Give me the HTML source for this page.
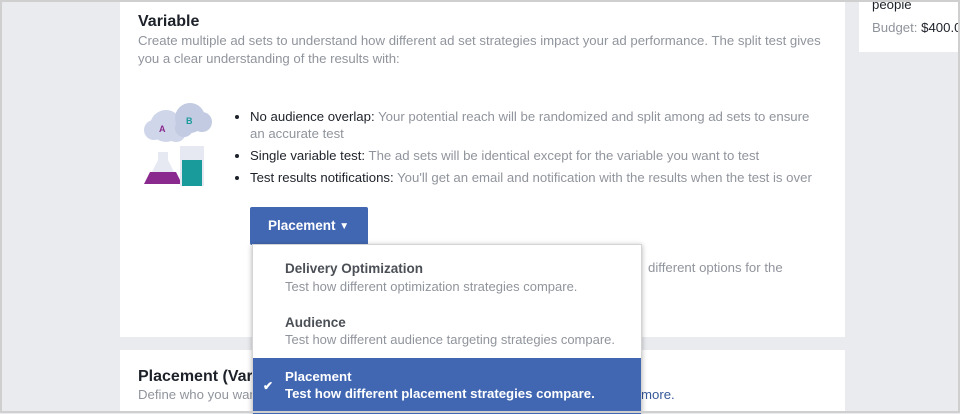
<!DOCTYPE html>
<html><head><style>
*{margin:0;padding:0;box-sizing:border-box}
body{width:960px;height:413px;overflow:hidden;background:#e9ebee;font-family:"Liberation Sans",Arial,sans-serif;position:relative}
.frame{position:absolute;inset:0;border:2px solid #cfcfcf;pointer-events:none;z-index:10}
.card{position:absolute;background:#fff}
.t{position:absolute;white-space:nowrap;font-size:13.2px;line-height:18px}
.g{color:#90949c}
.d{color:#1d2129}
ul{position:absolute;left:233px;top:108px;font-size:13.2px;line-height:17px;color:#1d2129;list-style:disc;padding-left:17px}
ul li{margin-bottom:5px}
ul li.w{margin-bottom:0}
ul span{color:#90949c}
</style></head><body>
<div class="card" style="left:120px;top:0;width:725px;height:337px"></div>
<div class="card" style="left:120px;top:350px;width:725px;height:63px"></div>
<div class="card" style="left:859px;top:0;width:101px;height:52px"></div>
<div class="t d" style="left:872px;top:-4px">people</div>
<div class="t g" style="left:872px;top:19px">Budget: <span style="color:#1d2129">$400.00</span></div>

<div class="t d" style="left:138px;top:12px;font-size:16px;font-weight:bold;line-height:20px">Variable</div>
<div class="t g" style="left:138px;top:32px">Create multiple ad sets to understand how different ad set strategies impact your ad performance. The split test gives</div>
<div class="t g" style="left:138px;top:50px">you a clear understanding of the results with:</div>

<svg style="position:absolute;left:140px;top:96px" width="80" height="92" viewBox="0 0 80 92">
<circle cx="26" cy="30" r="16" fill="#cfd6ea"/><circle cx="14" cy="34" r="10" fill="#cfd6ea"/><circle cx="36" cy="36" r="10" fill="#cfd6ea"/>
<circle cx="50" cy="22" r="15" fill="#c3cbe3"/><circle cx="62" cy="26" r="10" fill="#c3cbe3"/><circle cx="44" cy="32" r="9" fill="#c3cbe3"/>
<text x="19" y="36" font-size="9" font-weight="bold" fill="#8a2a8e" font-family="Liberation Sans">A</text>
<text x="46" y="28" font-size="9" font-weight="bold" fill="#1a9b9b" font-family="Liberation Sans">B</text>
<path d="M18 56h10v8l12 24H6l12-24z" fill="#e6e8f2"/><path d="M10 76h26l6 12H4z" fill="#8a2a8e"/>
<rect x="40" y="50" width="24" height="40" fill="#e6e8f2"/><rect x="42" y="64" width="20" height="26" fill="#1a9b9b"/>
</svg>
<ul>
<li class="w">No audience overlap: <span>Your potential reach will be randomized and split among ad sets to ensure</span></li>
<li style="list-style:none"><span>an accurate test</span></li>
<li>Single variable test: <span>The ad sets will be identical except for the variable you want to test</span></li>
<li>Test results notifications: <span>You'll get an email and notification with the results when the test is over</span></li>
</ul>
<div style="position:absolute;left:250px;top:207px;width:118px;height:38px;background:#4267b2;border-radius:2px;color:#fff;font-weight:bold;font-size:13.5px;line-height:38px;padding-left:18px">Placement <span style="font-size:10px;vertical-align:1px">▼</span></div>
<div class="t g" style="left:648px;top:259px">different options for the</div>

<div class="t d" style="left:138px;top:367px;font-size:16px;font-weight:bold;line-height:20px">Placement (Variable)</div>
<div class="t g" style="left:138px;top:386px">Define who you want your ads to reach. <span style="color:#365899;position:absolute;left:503px">more.</span></div>

<div style="position:absolute;left:252px;top:244px;width:390px;height:169px;background:#fff;box-shadow:0 1px 5px rgba(0,0,0,.3);border:1px solid #d4d4d4;z-index:5">
<div class="t" style="left:32px;top:15px;font-weight:bold;color:#4b4f56;font-size:13.5px">Delivery Optimization</div>
<div class="t g" style="left:32px;top:33px;font-size:13px">Test how different optimization strategies compare.</div>
<div class="t" style="left:32px;top:69px;font-weight:bold;color:#4b4f56;font-size:13.5px">Audience</div>
<div class="t g" style="left:32px;top:86px;font-size:13px">Test how different audience targeting strategies compare.</div>
<div style="position:absolute;left:0;top:113px;width:388px;height:56px;background:#4267b2;color:#fff;font-weight:bold">
<div class="t" style="left:10px;top:19px;font-size:12px">✔</div>
<div class="t" style="left:32px;top:10px;font-size:13.3px">Placement</div>
<div class="t" style="left:32px;top:27px;font-size:13.2px">Test how different placement strategies compare.</div>
</div></div>
<div class="frame"></div>
</body></html>
